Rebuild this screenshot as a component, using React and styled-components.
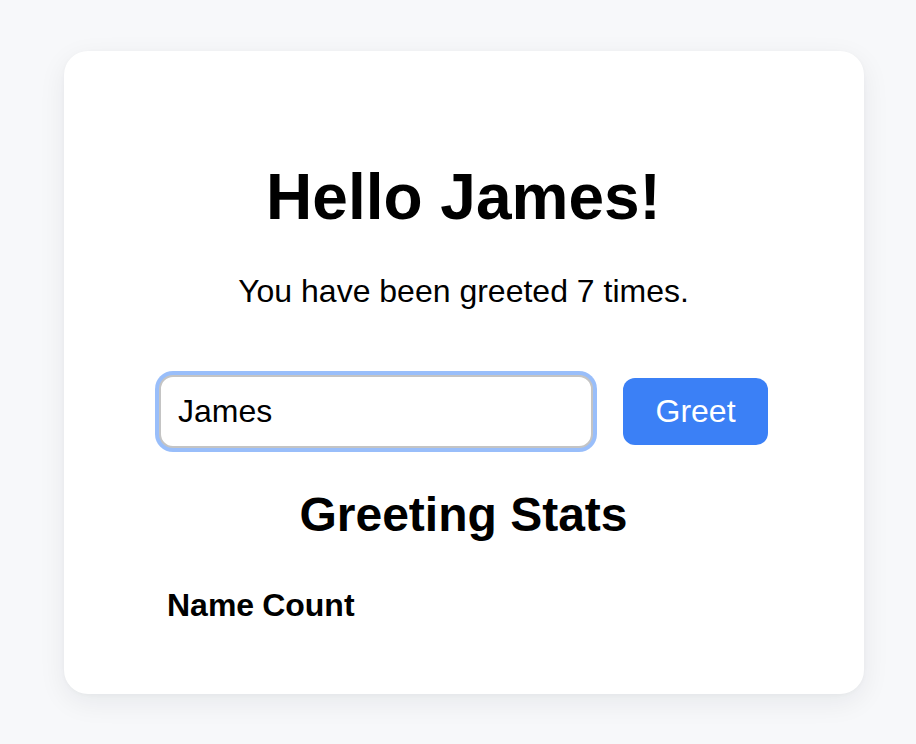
import React, { useState } from "react";
import styled, { createGlobalStyle } from "styled-components";

const Global = createGlobalStyle`
  html, body {
    margin: 0;
    padding: 0;
    background: #f7f8fa;
    font-family: "Liberation Sans", Arial, Helvetica, sans-serif;
    color: #000;
  }
`;

const Page = styled.div`
  padding: 51px 0 50px 64px;
`;

const Card = styled.div`
  box-sizing: border-box;
  width: 800px;
  height: 643px;
  background: #ffffff;
  border-radius: 24px;
  box-shadow: 0 8px 28px rgba(15, 23, 42, 0.07), 0 1px 4px rgba(15, 23, 42, 0.03);
  padding: 109px 96px 0 95px;
`;

const Title = styled.h1`
  margin: 0;
  font-size: 64px;
  line-height: 74px;
  font-weight: 700;
  text-align: center;
`;

const Subtitle = styled.p`
  margin: 39px 0 0;
  font-size: 32px;
  line-height: 37px;
  text-align: center;
`;

const Row = styled.div`
  display: flex;
  align-items: center;
  gap: 30px;
  margin-top: 65px;
`;

const NameInput = styled.input`
  box-sizing: border-box;
  width: 434px;
  height: 73px;
  border: 2px solid #c4c4c4;
  border-radius: 14px;
  padding: 0 17px;
  font-family: inherit;
  font-size: 32px;
  color: #000;
  outline: none;
  box-shadow: 0 0 0 4px rgba(59, 130, 246, 0.52);
  background: #fff;
`;

const Button = styled.button`
  box-sizing: border-box;
  width: 145px;
  height: 67px;
  border: none;
  border-radius: 12px;
  background: #3b80f6;
  color: #fff;
  font-family: inherit;
  font-size: 32px;
  cursor: pointer;
`;

const StatsTitle = styled.h2`
  margin: 39px 0 0;
  font-size: 48px;
  line-height: 55px;
  font-weight: 700;
  text-align: center;
`;

const Table = styled.table`
  margin: 42px 0 0 3px;
  border-spacing: 2px;
  font-size: 32px;
`;

const Th = styled.th`
  padding: 1px 3px;
  line-height: 37px;
  font-weight: 700;
  text-align: left;
`;

export default function App() {
  const [name, setName] = useState("James");
  return (
    <>
      <Global />
      <Page>
        <Card>
          <Title>Hello James!</Title>
          <Subtitle>You have been greeted 7 times.</Subtitle>
          <Row>
            <NameInput value={name} onChange={(e) => setName(e.target.value)} />
            <Button>Greet</Button>
          </Row>
          <StatsTitle>Greeting Stats</StatsTitle>
          <Table>
            <thead>
              <tr>
                <Th>Name</Th>
                <Th>Count</Th>
              </tr>
            </thead>
            <tbody></tbody>
          </Table>
        </Card>
      </Page>
    </>
  );
}
